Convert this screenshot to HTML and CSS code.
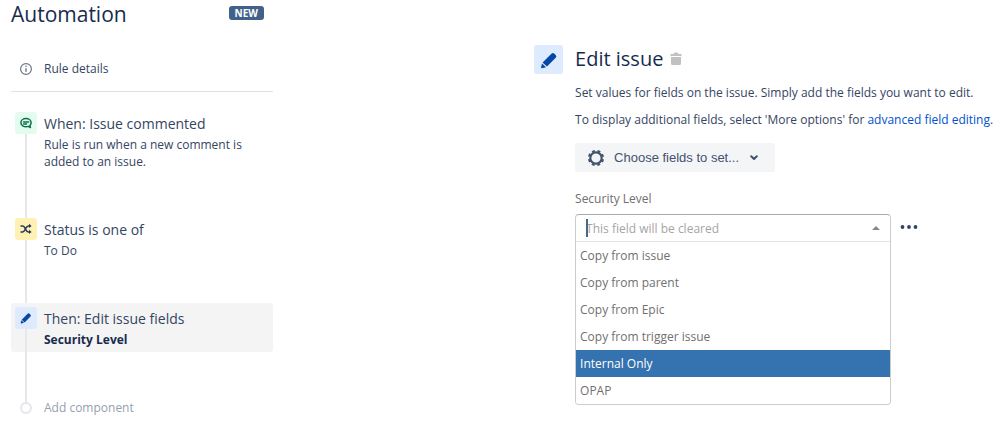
FILE: index.html
```
<!DOCTYPE html>
<html lang="en">
<head>
    <meta charset="UTF-8">
    <meta name="viewport" content="width=device-width, initial-scale=1.0">
    <title>Automation</title>
    <link rel="stylesheet" href="styles.css">
</head>
<body>
    <div class="page">
        <!-- Rule chain -->
        <aside class="sidebar">
            <header class="sidebar-header">
                <h1>Automation</h1>
                <span class="badge">NEW</span>
            </header>

            <a class="rule-details" href="#details">
                <svg width="14" height="14" viewBox="0 0 14 14">
                    <circle cx="7" cy="7" r="5.4" fill="none" stroke="#6B778C" stroke-width="1.2"/>
                    <path d="M7 6.3v3.5" stroke="#6B778C" stroke-width="1.4"/>
                    <circle cx="7" cy="4.3" r="0.8" fill="#6B778C"/>
                </svg>
                Rule details
            </a>

            <ol class="steps">
                <li class="step">
                    <span class="step-icon trigger">
                        <svg width="14" height="14" viewBox="0 0 14 14" fill="none" stroke="#0B6E4F" stroke-width="1.5" stroke-linecap="round" stroke-linejoin="round">
                            <path d="M9.6 10.4C5.2 11.8 1.9 9.6 1.9 6.8C1.9 4.3 4.2 2.6 7 2.6s5.1 1.7 5.1 4.2c0 1.1-.5 2-1.2 2.7l.5 2.1z"/>
                            <path d="M4.6 5.9h5M4.6 7.9h3"/>
                        </svg>
                    </span>
                    <div class="step-text">
                        <h2>When: Issue commented</h2>
                        <p>Rule is run when a new comment is added to an issue.</p>
                    </div>
                </li>
                <li class="step">
                    <span class="step-icon condition">
                        <svg width="14" height="14" viewBox="0 0 14 14">
                            <path d="M1.5 3.9h2.2c2.8 0 2.6 6 5.6 6h1.4M1.5 9.9h2.2c2.8 0 2.6-6 5.6-6h1.4" fill="none" stroke="#253858" stroke-width="1.5"/>
                            <path d="M10 1.7l2.6 2.2L10 6.1zM10 7.7l2.6 2.2-2.6 2.2z" fill="#253858"/>
                        </svg>
                    </span>
                    <div class="step-text">
                        <h2>Status is one of</h2>
                        <p>To Do</p>
                    </div>
                </li>
                <li class="step selected">
                    <span class="step-icon action">
                        <svg width="12" height="12" viewBox="0 0 18 18" fill="#0747A6">
                            <path d="M2.6 11.5L11.4 2.7q1.5-1.4 3 0l1.3 1.3q1.4 1.4 0 2.8L7 15.6z"/>
                            <path d="M2 12.4l4 3.8-4 1q-1 .1-.9-.9z"/>
                        </svg>
                    </span>
                    <div class="step-text">
                        <h2>Then: Edit issue fields</h2>
                        <p>Security Level</p>
                    </div>
                </li>
                <li class="step add">
                    <span class="dot"></span>
                    <a href="#add">Add component</a>
                </li>
            </ol>
        </aside>

        <!-- Action settings -->
        <main class="editor">
            <span class="editor-icon">
                <svg width="18" height="18" viewBox="0 0 18 18" fill="#0747A6">
                    <path d="M2.6 11.5L11.4 2.7q1.5-1.4 3 0l1.3 1.3q1.4 1.4 0 2.8L7 15.6z"/>
                    <path d="M2 12.4l4 3.8-4 1q-1 .1-.9-.9z"/>
                </svg>
            </span>
            <div class="editor-body">
                <div class="editor-title">
                    <h1>Edit issue</h1>
                    <button class="icon-button" type="button" aria-label="Delete">
                        <svg width="12" height="14" viewBox="0 0 12 14" fill="#C1C1C1">
                            <path d="M1 5h10v6.5q0 1.5-1.5 1.5h-7Q1 13 1 11.5zM1 2h2.5q.2-1.500 1.500-1.500h2q1.300 0 1.500 1.500H11q.5 0 .5.5v1.500H.5v-1.500Q.5 2 1 2z"/>
                        </svg>
                    </button>
                </div>
                <p>Set values for fields on the issue. Simply add the fields you want to edit.</p>
                <p>To display additional fields, select 'More options' for <a href="#advanced">advanced field editing</a>.</p>

                <button class="choose" type="button">
                    <svg width="18" height="18" viewBox="0 0 18 18" fill="none" stroke="#42526E">
                        <circle cx="9" cy="9" r="5.7" stroke-width="2.2"/>
                        <circle cx="9" cy="9" r="7.2" stroke-width="1.8" stroke-dasharray="3 2.655" stroke-dashoffset="-1.3"/>
                    </svg>
                    Choose fields to set...
                    <svg class="chevron" width="8" height="6" viewBox="0 0 8 6" fill="none" stroke="#42526E" stroke-width="2" stroke-linecap="round" stroke-linejoin="round">
                        <path d="M1.2 1.2L4 4l2.8-2.8"/>
                    </svg>
                </button>

                <label class="field-label" for="level-search">Security Level</label>
                <div class="field-row">
                    <div class="dropdown">
                        <div class="dropdown-search">
                            <input id="level-search" type="text" placeholder="This field will be cleared">
                            <span class="caret"></span>
                            <svg width="8" height="4" viewBox="0 0 8 4" fill="#888">
                                <path d="M0 4l4-4 4 4z"/>
                            </svg>
                        </div>
                        <select size="6" aria-label="Security Level options">
                            <option>Copy from issue</option>
                            <option>Copy from parent</option>
                            <option>Copy from Epic</option>
                            <option>Copy from trigger issue</option>
                            <option selected>Internal Only</option>
                            <option>OPAP</option>
                        </select>
                    </div>
                    <button class="icon-button more" type="button" aria-label="More">
                        <svg width="18" height="4" viewBox="0 0 18 4" fill="#344563">
                            <circle cx="2.5" cy="2" r="1.9"/>
                            <circle cx="9" cy="2" r="1.9"/>
                            <circle cx="15.5" cy="2" r="1.9"/>
                        </svg>
                    </button>
                </div>
            </div>
        </main>
    </div>
</body>
</html>
```
FILE: styles.css
```
* {
    box-sizing: border-box;
}
body {
    margin: 0;
    background-color: #FFFFFF;
    color: #344563;
    font-family: "Open Sans", "Noto Sans", sans-serif;
    font-size: 12px;
    line-height: 17px;
}
h1, h2, p, ol {
    margin: 0;
    padding: 0;
    font-weight: normal;
}
a {
    color: #0052CC;
    text-decoration: none;
}
button {
    border: none;
    cursor: pointer;
}
svg {
    display: block;
}
.page {
    display: grid;
    grid-template-columns: 9fr 8fr;
    padding-left: 11px;
}

/* Sidebar */
.sidebar {
    max-width: 262px;
}
.sidebar-header {
    display: flex;
    justify-content: space-between;
    padding-right: 9px;
}
h1 {
    color: #172B4D;
    font-size: 21px;
    line-height: 28px;
}
.badge {
    margin-top: 6px;
    padding: 0 6px;
    height: 14px;
    border-radius: 3px;
    background-color: #42618A;
    color: #FFFFFF;
    font-size: 10px;
    font-weight: bold;
    line-height: 14px;
}
.rule-details {
    display: flex;
    align-items: center;
    gap: 11px;
    height: 64px;
    margin-bottom: 16px;
    padding: 18px 8px 0;
    border-bottom: 1px solid #DFE1E6;
    color: #344563;
}
.steps {
    display: flex;
    flex-direction: column;
    gap: 40px;
    list-style: none;
}
.step {
    position: relative;
    display: flex;
    gap: 7px;
    padding: 4px;
    border-radius: 3px;
}
.step::before {
    content: "";
    position: absolute;
    top: 4px;
    left: 14px;
    width: 2px;
    height: calc(100% + 46px);
    background-color: #E6E6EB;
}
.step.selected {
    background-color: #F4F4F4;
}
.step-icon {
    position: relative;
    display: flex;
    flex: 0 0 22px;
    align-items: center;
    justify-content: center;
    height: 22px;
    border-radius: 3px;
}
.trigger {
    background-color: #E3FCEF;
}
.condition {
    background-color: #FFF0B3;
}
.action {
    background-color: #DEEBFF;
}
.step h2 {
    font-size: 14px;
    line-height: 24px;
}
.step.selected p {
    color: #172B4D;
    font-weight: bold;
}
.step.add {
    align-items: center;
    gap: 12px;
}
.step.add::before {
    display: none;
}
.step.add a {
    color: #97A0AF;
    line-height: 24px;
}
.dot {
    width: 12px;
    height: 12px;
    margin-left: 5px;
    border: 2px solid #E6E6EB;
    border-radius: 50%;
    background-color: #FFFFFF;
}

/* Editor */
.editor {
    display: flex;
    gap: 12px;
    padding-top: 45px;
}
.editor-icon {
    display: flex;
    flex: 0 0 29px;
    align-items: center;
    justify-content: center;
    height: 29px;
    border-radius: 3px;
    background-color: #DEEBFF;
}
.editor-body {
    flex: 1;
    min-width: 0;
}
.editor-title {
    display: flex;
    align-items: center;
    gap: 7px;
    margin-bottom: 11px;
}
.editor-title h1 {
    font-size: 20px;
}
.editor-body p {
    margin-bottom: 10px;
}
.icon-button {
    padding: 0;
    background: none;
}
.choose {
    display: flex;
    align-items: center;
    gap: 9px;
    width: 200px;
    height: 29px;
    margin: 15px 0 17px;
    padding: 0 12px;
    border-radius: 3px;
    background-color: #F4F5F7;
    color: #42526E;
    font-family: "Liberation Sans", Arial, sans-serif;
    font-size: 13px;
}
.chevron {
    margin-left: 2px;
}
.field-label {
    display: block;
    margin-bottom: 5px;
    color: #707070;
    line-height: 20px;
}
.field-row {
    display: flex;
    align-items: flex-start;
    gap: 9px;
}
.dropdown {
    flex: 0 1 316px;
    border: 1px solid #CCCCCC;
    border-top-color: #AAAAAA;
    border-radius: 4px;
    overflow: hidden;
}
.dropdown-search {
    position: relative;
    display: flex;
    align-items: center;
    height: 27px;
    padding: 0 10px;
    border-bottom: 1px solid #E4E4E4;
}
.dropdown-search input {
    flex: 1;
    min-width: 0;
    padding: 0;
    border: none;
    outline: none;
    font: inherit;
}
.dropdown-search input::placeholder {
    color: #A5A5A5;
}
.caret {
    position: absolute;
    top: 4px;
    left: 10px;
    width: 2px;
    height: 18px;
    background-color: #4A6785;
}
.dropdown select {
    display: block;
    width: 100%;
    height: 162px;
    padding: 0;
    border: none;
    outline: none;
    background-color: #FFFFFF;
    font: inherit;
    overflow: hidden;
}
.dropdown option {
    height: 27px;
    padding: 5px 4px;
    color: #707070;
    line-height: 17px;
}
.dropdown option:checked {
    background: #3572B0 linear-gradient(#3572B0, #3572B0);
    color: #FFFFFF;
}
.more {
    padding: 11px 0;
}
```
